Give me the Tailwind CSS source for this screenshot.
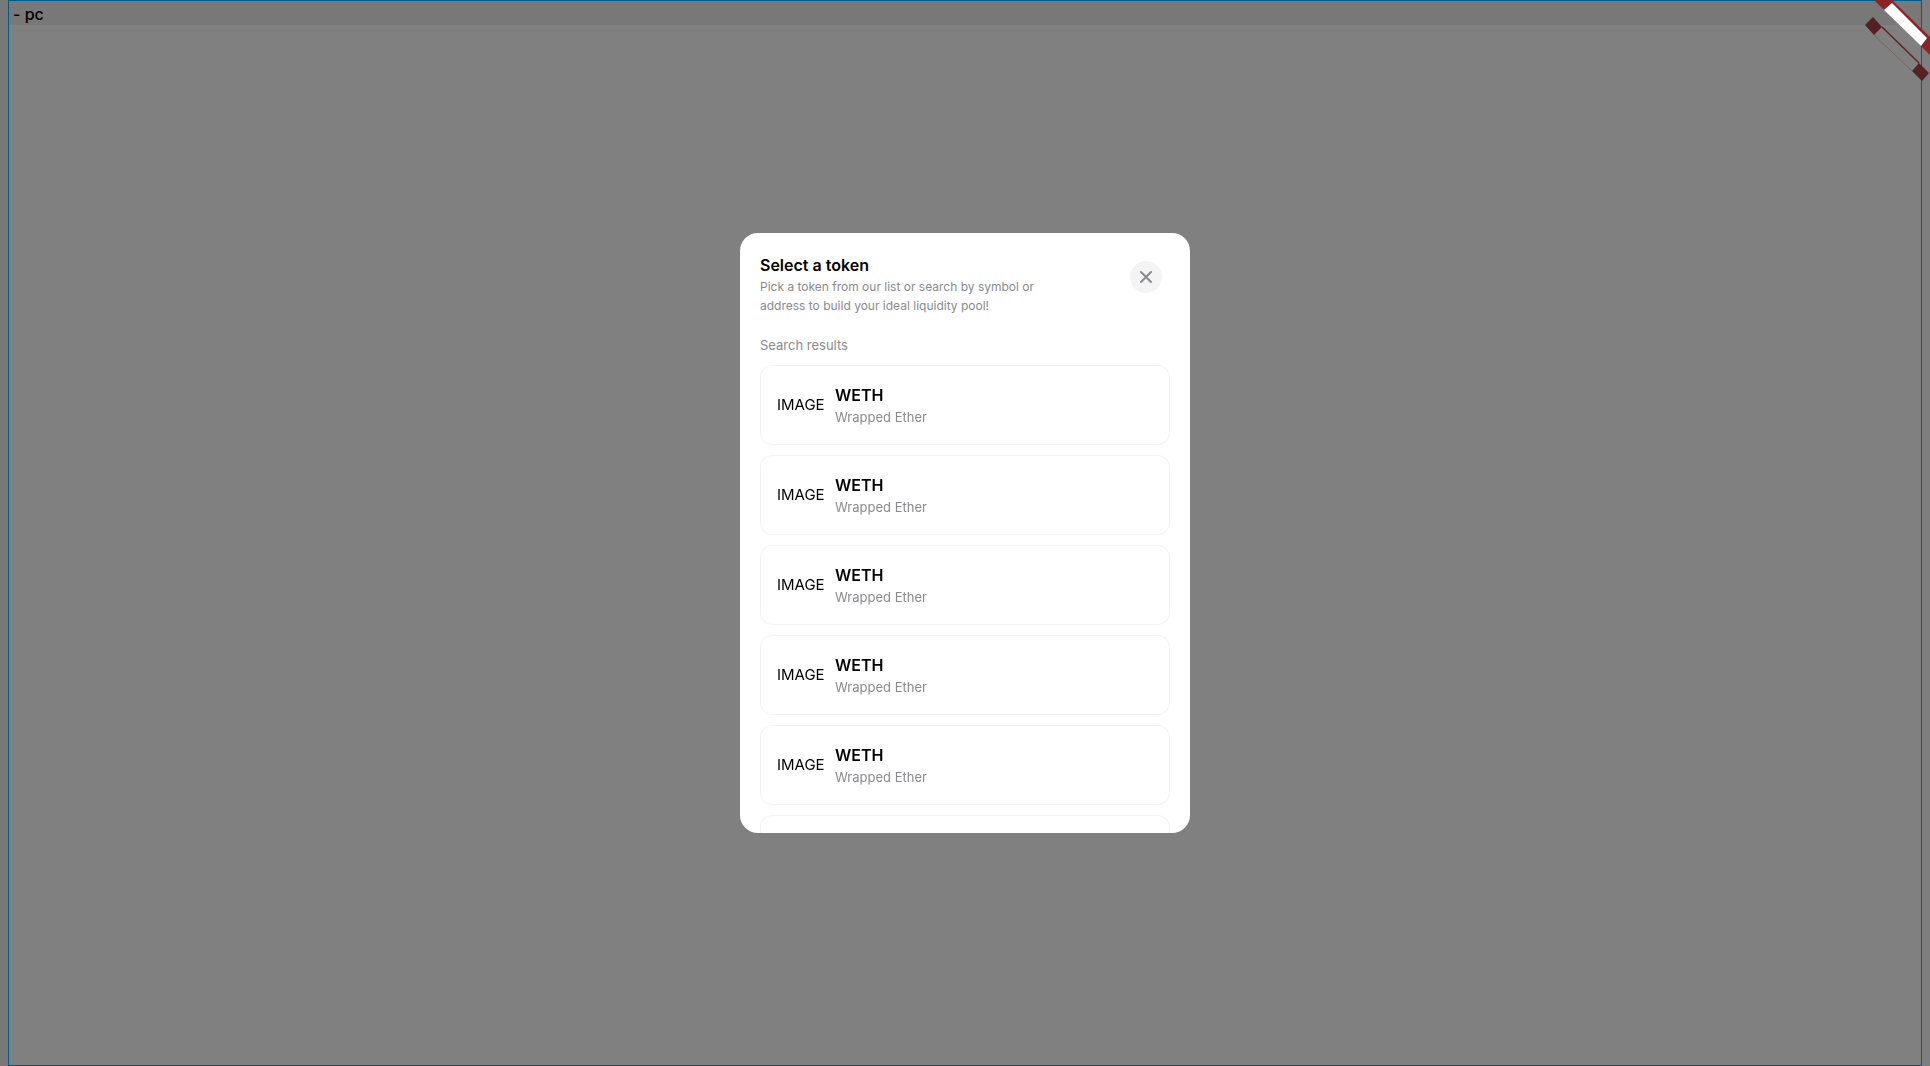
<!DOCTYPE html>
<html lang="en">
<head>
<meta charset="utf-8">
<title>Select a token</title>
<script src="https://cdn.jsdelivr.net/npm/@tailwindcss/browser@4"></script>
</head>
<body class="min-h-screen overflow-hidden bg-[#808080] font-['Inter',sans-serif] text-black">
<div class="flex min-h-screen bg-[#787878] pl-2">
  <main class="min-w-0 flex-1 border border-[#005b86] bg-[#808080]">
    <h1 class="flex h-6 items-center bg-[#787878] pt-0.5 pl-1 text-base font-medium">- pc</h1>
  </main>
  <div class="w-2 bg-[#7e7e7e]"></div>
</div>

<!-- Corner ribbons -->
<svg class="absolute top-0 right-0" width="70" height="86" viewBox="0 0 70 86" aria-hidden="true">
  <path d="M14 0H32L70 37V55Z" fill="#8c2426"/>
  <path d="M32 3L67 38L61 46L24 10Z" fill="#fff"/>
  <path d="M38 11L32 17M46 19L40 25M53 26L47 32M60 33L54 39" stroke="#f6f1f1"/>
  <path d="M22 27L59 63L52 71L14 35Z" fill="#808080"/>
  <path d="M27 32L22 38M34 39L29 45M42 46L36 53M49 54L44 60" stroke="#8a8282"/>
  <path d="M14 35L52 71" stroke="#746464"/>
  <path d="M22 27L59 63" stroke="#5d2325" stroke-width="1.5"/>
  <path d="M13 17L22 27L14 35L5 25ZM59 63L69 73L62 81L52 71Z" fill="#552124"/>
</svg>

<div class="fixed inset-0 flex items-center justify-center">
  <section role="dialog" aria-labelledby="dialog-title" class="flex h-[600px] w-[450px] flex-col overflow-hidden rounded-[18px] bg-white px-5 pt-5">
    <header class="flex items-start justify-between">
      <div class="w-[290px]">
        <h2 id="dialog-title" class="text-base leading-6 font-semibold">Select a token</h2>
        <p class="text-xs leading-[19px] text-[#8a8a8e]">Pick a token from our list or search by symbol or<br>address to build your ideal liquidity pool!</p>
      </div>
      <button type="button" aria-label="Close" class="mt-2 mr-2 flex size-8 items-center justify-center rounded-full bg-[#f4f4f4]">
        <svg width="14" height="14" viewBox="0 0 14 14" fill="none" stroke="#8a8a8e" stroke-width="2" stroke-linecap="round"><path d="M2 2L12 12M12 2L2 12"/></svg>
      </button>
    </header>
    <h3 class="mt-5 text-[13px] leading-5 text-[#8a8a8e]">Search results</h3>
    <ul id="tokens" class="mt-[10px] flex min-h-0 flex-1 flex-col gap-[10px] overflow-y-auto [scrollbar-width:none]"></ul>
  </section>
</div>
<template id="token">
  <li class="shrink-0">
    <button type="button" class="flex h-20 w-full items-center gap-[10px] rounded-xl border border-[#f2f2f2] bg-white px-4 text-left">
      <span class="w-12 text-[15px]">IMAGE</span>
      <span class="flex flex-col">
        <span class="text-base leading-6 font-semibold">WETH</span>
        <span class="text-[13px] leading-5 text-[#8a8a8e]">Wrapped Ether</span>
      </span>
    </button>
  </li>
</template>
<script>
  const list = document.getElementById('tokens');
  const row = document.getElementById('token');
  for (let i = 0; i < 6; i++) list.append(row.content.cloneNode(true));
</script>
</body>
</html>
